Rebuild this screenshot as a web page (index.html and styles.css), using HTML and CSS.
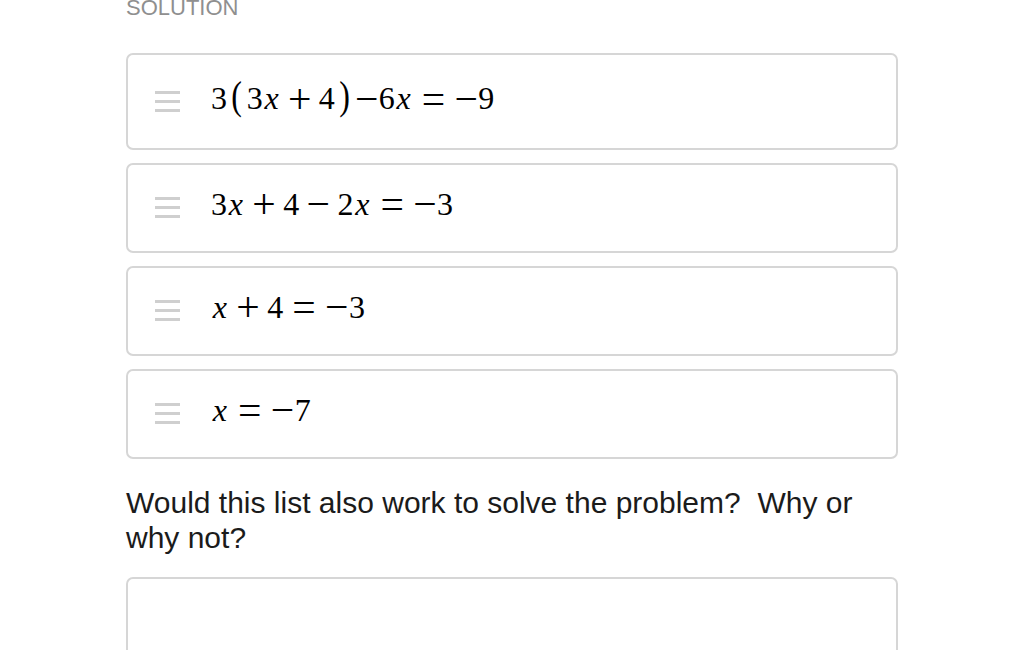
FILE: index.html
```html
<!DOCTYPE html>
<html>
<head>
<meta charset="utf-8">
<link rel="stylesheet" href="styles.css">
</head>
<body>
<main class="page">
  <div class="label">SOLUTION</div>
  <ul class="steps">
    <li class="card card-tall">
      <span class="grip"><i></i><i></i><i></i></span>
      <span class="math"><span class="n">3</span><span class="paren">(</span><span class="n">3</span><span class="v">x</span><span class="bin">+</span><span class="n">4</span><span class="paren">)</span><span class="op">−</span><span class="n">6</span><span class="v">x</span><span class="rel">=</span><span class="op">−</span><span class="n">9</span></span>
    </li>
    <li class="card">
      <span class="grip"><i></i><i></i><i></i></span>
      <span class="math"><span class="n">3</span><span class="v">x</span><span class="bin">+</span><span class="n">4</span><span class="bin">−</span><span class="n">2</span><span class="v">x</span><span class="rel">=</span><span class="op">−</span><span class="n">3</span></span>
    </li>
    <li class="card">
      <span class="grip"><i></i><i></i><i></i></span>
      <span class="math"><span class="v">x</span><span class="bin">+</span><span class="n">4</span><span class="rel">=</span><span class="op">−</span><span class="n">3</span></span>
    </li>
    <li class="card">
      <span class="grip"><i></i><i></i><i></i></span>
      <span class="math"><span class="v">x</span><span class="rel">=</span><span class="op">−</span><span class="n">7</span></span>
    </li>
  </ul>
  <p class="question">Would this list also work to solve the problem?&nbsp; Why or why not?</p>
  <div class="answer"></div>
</main>
</body>
</html>
```

FILE: styles.css
```css
html, body {
  margin: 0;
  padding: 0;
  background: #ffffff;
}

.page {
  margin-left: 126px;
  width: 772px;
  font-family: "Liberation Sans", Arial, sans-serif;
  color: #1b1b1b;
}

.label {
  font-size: 22px;
  line-height: 22px;
  margin-top: -3px;
  color: #8f8f8f;
}

.steps {
  list-style: none;
  margin: 34px 0 0 0;
  padding: 0;
  display: flex;
  flex-direction: column;
  gap: 13px;
}

.card {
  box-sizing: border-box;
  min-height: 90px;
  border: 2px solid #d6d6d6;
  border-radius: 7px;
  display: flex;
  align-items: center;
  padding: 0 0 2px 27px;
  gap: 31px;
}

.card-tall {
  min-height: 97px;
}

.grip {
  display: flex;
  flex-direction: column;
  gap: 6px;
  width: 25px;
  margin-top: 1px;
}

.grip i {
  display: block;
  height: 3px;
  background: #cfcfcf;
}

.math {
  font-family: "Liberation Serif", "Times New Roman", serif;
  font-size: 32px;
  line-height: 37px;
  color: #000;
  white-space: nowrap;
  margin-bottom: 4px;
}

.math span {
  display: inline-block;
}

.n {
  width: 0.5em;
  text-align: center;
}

.v {
  font-style: italic;
  width: 0.56em;
  text-align: center;
}

.bin,
.rel,
.op {
  font-size: 1.3em;
  line-height: 1;
  width: 0.58em;
  text-align: center;
  vertical-align: -0.085em;
}

.bin {
  margin: 0 0.17em;
}

.rel {
  margin: 0 0.21em;
}

.paren {
  font-size: 1.25em;
  line-height: 1;
  transform: scaleX(0.8);
  margin: 0 0.08em;
}

.question {
  margin: 26px 0 0 0;
  font-size: 30px;
  line-height: 35px;
  color: #1b1b1b;
}

.answer {
  box-sizing: border-box;
  margin-top: 22px;
  height: 120px;
  border: 2px solid #d6d6d6;
  border-radius: 7px;
}
```
